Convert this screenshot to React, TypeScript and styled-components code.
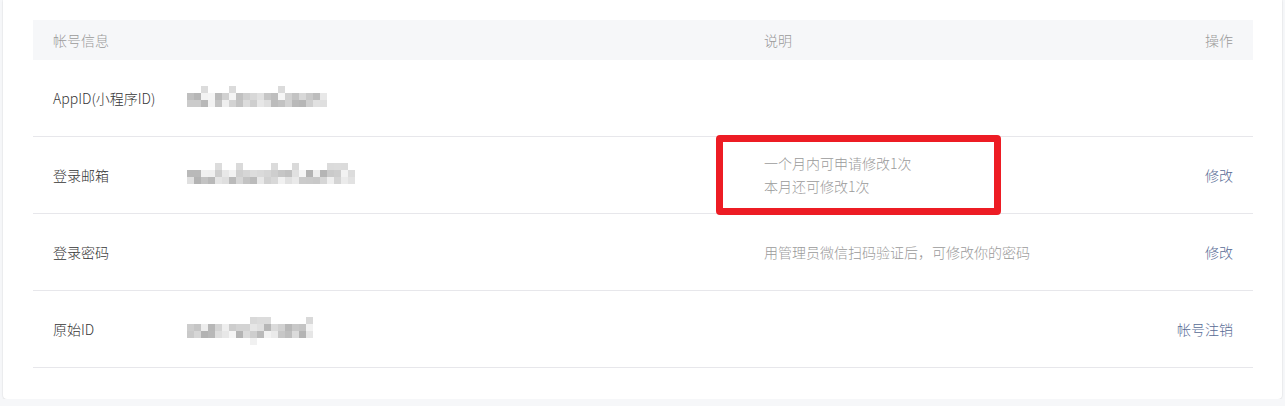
import styled, { createGlobalStyle } from "styled-components";

const GlobalStyle = createGlobalStyle`
  html, body {
    margin: 0;
    padding: 0;
    background: #f6f7f9;
    font-family: "Noto Sans CJK SC", "Noto Sans", sans-serif;
  }
`;

type Row = {
  label: string;
  mosaic?: { cols: number; seed: number; dip?: number[] };
  desc?: string[];
  action?: string;
  marked?: boolean;
};

const rows: Row[] = [
  { label: "AppID(小程序ID)", mosaic: { cols: 20, seed: 7 } },
  {
    label: "登录邮箱",
    mosaic: { cols: 24, seed: 13 },
    desc: ["一个月内可申请修改1次", "本月还可修改1次"],
    action: "修改",
    marked: true,
  },
  { label: "登录密码", desc: ["用管理员微信扫码验证后，可修改你的密码"], action: "修改" },
  { label: "原始ID", mosaic: { cols: 18, seed: 29, dip: [9] }, action: "帐号注销" },
];

// pixelated placeholder for the blurred value
function Mosaic({ cols, seed, dip = [] }: { cols: number; seed: number; dip?: number[] }) {
  let s = seed;
  const rnd = () => {
    s = (s * 9301 + 49297) % 233280;
    return s / 233280;
  };
  const cell = 7;
  const cells: { x: number; y: number; c: string }[] = [];
  for (let y = 0; y < 4; y++) {
    for (let x = 0; x < cols; x++) {
      const r = rnd();
      if (y === 0 && r > 0.15) continue;
      if (y === 3 && !dip.includes(x)) continue;
      const shade = y === 0 || y === 3 ? 0.85 + r * 0.1 : 0.7 + r * 0.27;
      const v = Math.round(shade * 255);
      cells.push({ x: x * cell, y: y * cell, c: `rgb(${v},${v},${v})` });
    }
  }
  return (
    <MosaicSvg width={cols * cell} height={cell * 4} viewBox={`0 0 ${cols * cell} ${cell * 4}`}>
      {cells.map((k, i) => (
        <rect key={i} x={k.x} y={k.y} width={cell} height={cell} fill={k.c} />
      ))}
    </MosaicSvg>
  );
}

export default function App() {
  return (
    <>
      <GlobalStyle />
      <Card>
        <Table>
          <HeadRow>
            <HeadCell>帐号信息</HeadCell>
            <HeadCell />
            <HeadCell>说明</HeadCell>
            <HeadCell $right>操作</HeadCell>
          </HeadRow>
          {rows.map((row) => (
            <BodyRow key={row.label}>
              <Label>{row.label}</Label>
              <Value>{row.mosaic && <Mosaic {...row.mosaic} />}</Value>
              <Desc>
                {row.desc?.map((line) => <div key={line}>{line}</div>)}
                {row.marked && <Marker />}
              </Desc>
              <Action>{row.action && <Link href="#">{row.action}</Link>}</Action>
            </BodyRow>
          ))}
        </Table>
      </Card>
    </>
  );
}

const Card = styled.div`
  margin: 0 3px;
  width: 1279px;
  box-sizing: border-box;
  padding: 20px 29px 31px 30px;
  background: #fff;
  border-radius: 0 0 4px 4px;
  box-shadow: 0 1px 2px rgba(0, 0, 0, 0.08), 0 0 0 1px rgba(0, 0, 0, 0.025);
`;

const Table = styled.div`
  display: flex;
  flex-direction: column;
  font-size: 14px;
  font-weight: 300;
`;

const grid = `
  display: grid;
  grid-template-columns: 134px 577px 1fr 200px;
  align-items: center;
`;

const HeadRow = styled.div`
  ${grid}
  height: 40px;
  background: #f6f7f9;
  color: #9a9a9a;
`;

const HeadCell = styled.div<{ $right?: boolean }>`
  padding: 0 20px;
  text-align: ${(p) => (p.$right ? "right" : "left")};
`;

const BodyRow = styled.div`
  ${grid}
  height: 77px;
  box-sizing: border-box;
  border-bottom: 1px solid #e7e7eb;
`;

const Label = styled.div`
  padding-left: 20px;
  color: #353535;
  white-space: nowrap;
`;

const Value = styled.div`
  padding-left: 20px;
  display: flex;
  align-items: center;
`;

const MosaicSvg = styled.svg`
  display: block;
  margin-top: 4px;
`;

const Desc = styled.div`
  position: relative;
  padding-left: 20px;
  color: #9a9a9a;
  line-height: 23px;
`;

const Marker = styled.div`
  position: absolute;
  left: -28px;
  top: calc(50% - 40px);
  width: 285px;
  height: 80px;
  box-sizing: border-box;
  border: 7px solid #ed1c24;
  border-radius: 4px;
`;

const Action = styled.div`
  padding-right: 20px;
  text-align: right;
`;

const Link = styled.a`
  color: #576b95;
  text-decoration: none;
`;
